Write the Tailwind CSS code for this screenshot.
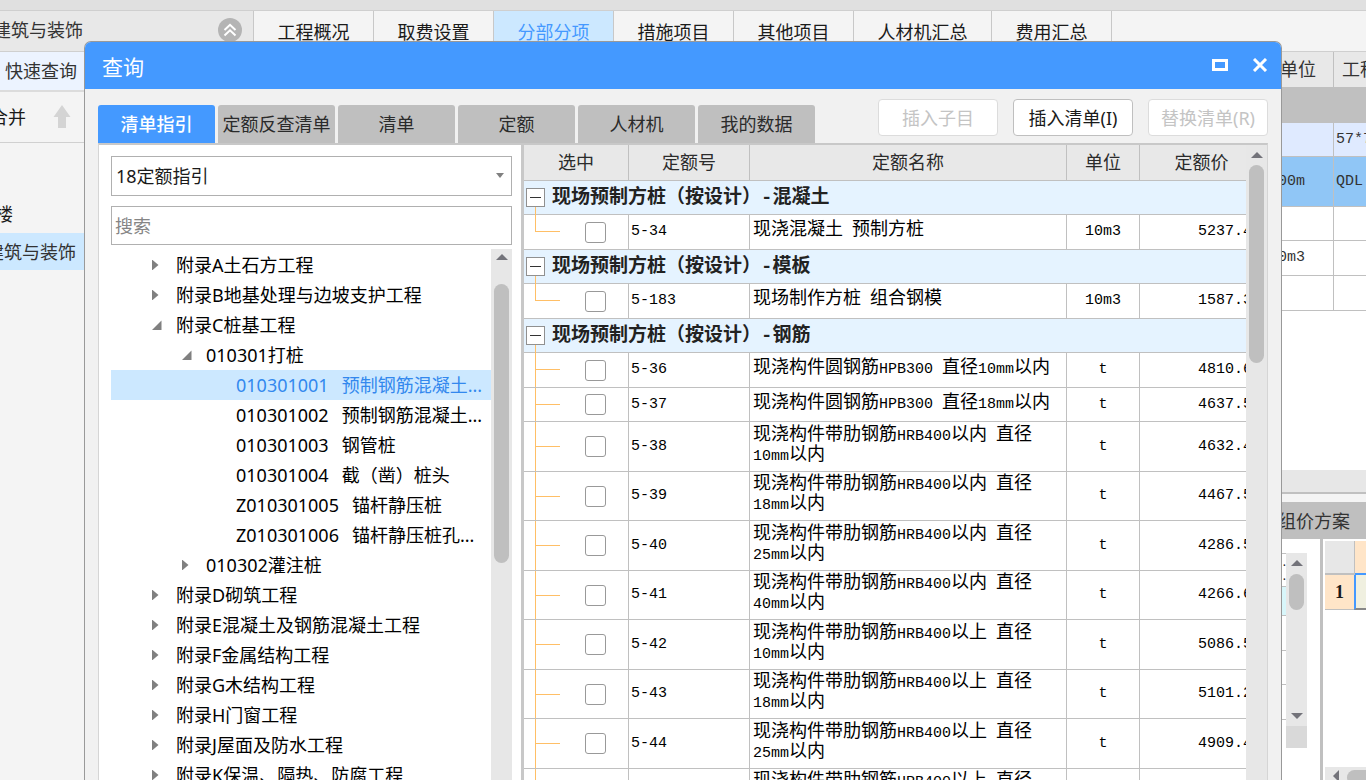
<!DOCTYPE html>
<html lang="zh-CN">
<head>
<meta charset="utf-8">
<meta name="viewport" content="width=device-width, initial-scale=1">
<title>查询</title>
<script src="https://cdn.jsdelivr.net/npm/@tailwindcss/browser@4"></script>
</head>
<body class="relative flex h-screen flex-col overflow-hidden bg-[#f4f4f4] font-['Noto_Sans','Noto_Sans_CJK_SC',sans-serif] text-[18px] leading-6 text-[#1a1a1a]">

<!-- main window -->
<div class="h-[10px] shrink-0 bg-[#e0e0e0]"></div>
<header class="flex h-[42px] shrink-0 border-y border-[#cfcfcf]">
  <div class="flex w-[253px] shrink-0 items-start justify-between overflow-hidden bg-[#e8e8e8] pt-[7px] pr-[11px]">
    <span class="-ml-[7px] text-[#333]">建筑与装饰</span>
    <button class="size-6" aria-label="收起">
      <svg viewBox="0 0 24 24" class="size-6"><circle cx="12" cy="12" r="12" fill="#b4b4b4"/><path d="M6.500 12 12 6.800 17.500 12M6.500 17.500 12 12.300 17.500 17.500" fill="none" stroke="#fff" stroke-width="2"/></svg>
    </button>
  </div>
  <nav class="flex [&>button]:w-[120px] [&>button]:border-r [&>button]:border-[#c8c8c8] [&>button]:pt-[6px] [&>button]:pb-1">
    <button class="min-w-[121px] border-l">工程概况</button>
    <button>取费设置</button>
    <button class="bg-[#cce8ff] text-[#4499ff]">分部分项</button>
    <button>措施项目</button>
    <button>其他项目</button>
    <button class="min-w-[138px]">人材机汇总</button>
    <button>费用汇总</button>
  </nav>
</header>

<div class="flex min-h-0 flex-1 justify-between">
  <aside class="w-[253px] shrink-0 overflow-hidden">
    <div class="flex h-[40px] items-center border-b-2 border-[#dcdcdc] bg-[#ecf3ff] pl-[5px] text-[#333]">快速查询</div>
    <div class="flex h-[51px] items-center gap-[27px] border-b border-[#d0d0d0]">
      <span class="-ml-[10px]">合并</span>
      <svg viewBox="0 0 18 24" class="h-6 w-[18px]"><path d="M9 0 17.500 12H13V23H5V12H.500Z" fill="#d4d4d4"/></svg>
    </div>
    <div class="h-[90px] pt-[59px]"><span class="-ml-[5px]">楼</span></div>
    <div class="flex h-[37px] items-center bg-[#cce8ff] text-[#333]"><span class="-ml-[14px]">建筑与装饰</span></div>
  </aside>

  <section class="flex w-[103px] shrink-0 flex-col overflow-hidden bg-white">
    <table class="w-[140px] table-fixed border-separate border-spacing-0 text-left font-['Liberation_Mono','Noto_Sans_CJK_SC',monospace] text-[15px] text-[#333] [&_td]:border-r [&_td]:border-b [&_td]:border-[#c0c0c0] [&_td:first-child]:pl-[6px] [&_td]:pl-[2px] [&_th]:border-r [&_th]:border-b [&_th]:border-[#c0c0c0] [&_th]:pt-[3px]">
      <colgroup><col class="w-[71px]"><col></colgroup>
      <tr class="h-[36px] bg-[#e8e8e8] text-[18px]"><th class="font-normal text-center">单位</th><th class="pl-2 font-normal whitespace-nowrap">工程量</th></tr>
      <tr class="h-[35px] bg-[#c0c0c0]"><td></td><td></td></tr>
      <tr class="h-[34px] bg-[#dfeaff]"><td></td><td>57*7</td></tr>
      <tr class="h-[50px] bg-[#90c6f6]"><td>100m</td><td>QDL</td></tr>
      <tr class="h-[34px]"><td></td><td></td></tr>
      <tr class="h-[35px]"><td>10m3</td><td></td></tr>
      <tr class="h-[35px]"><td></td><td></td></tr>
    </table>
    <div class="mt-[159px] h-[24px] shrink-0 border-b-2 border-[#c0c0c0] bg-[#e7e7e7]"></div>
    <div class="h-[8px] shrink-0 bg-[#f4f4f4]"></div>
    <div class="flex h-[37px] shrink-0 items-center bg-[#bfbfbf] pl-[15px] text-[#333]">组价方案</div>
    <div class="flex min-h-0 flex-1">
      <div class="flex w-[60px] shrink-0 border-r-[3px] border-[#c0c0c0] pt-[14px]">
        <div class="w-[23px] text-right text-[12px] leading-[14px] [&>div]:border-b [&>div]:border-[#c0c0c0]">
          <div class="h-[34px] border-t pt-px"><p>.</p><p>.</p></div>
          <div class="h-[29px] bg-[#d8f6fa]"></div>
          <div class="h-[35px]"></div>
          <div class="h-[34px]"></div>
          <div class="h-[35px]"></div>
        </div>
        <div class="flex h-[195px] w-[21px] flex-col items-center border-b-[22px] border-[#d9d9d9] bg-[#e7e7e7]">
          <svg viewBox="0 0 12 6" class="mt-[7px] h-[6px] w-3"><path d="M6 0 12 6H0Z" fill="#73737a"/></svg>
          <div class="mt-2 h-9 w-[15px] rounded-full bg-[#bfbfbf]"></div>
          <svg viewBox="0 0 12 6" class="mt-auto mb-[7px] h-[6px] w-3"><path d="M0 0H12L6 6Z" fill="#73737a"/></svg>
        </div>
      </div>
      <div class="flex min-w-0 flex-1 flex-col pl-[2px]">
        <div class="flex h-[36px] shrink-0 pt-[2px]">
          <div class="w-[30px] border-r border-b-2 border-[#c0c0c0] bg-[#e7e7e7]"></div>
          <div class="flex-1 border-b-2 border-[#4499ff] bg-[#ffe5c8]"></div>
        </div>
        <div class="flex h-[35px] shrink-0">
          <div class="flex w-[29px] items-center justify-center border-b border-[#c0c0c0] bg-[#ffe5c8] font-['Liberation_Serif',serif] font-bold">1</div>
          <div class="flex-1 border-b-2 border-l-2 border-b-[#888] border-l-[#4499ff] bg-[#f0f0e0]"></div>
        </div>
        <div class="mt-auto flex h-[13px] gap-2 overflow-hidden bg-[#e7e7e7] pt-[3px] pl-2">
          <svg viewBox="0 0 6 12" class="h-3 w-[6px] shrink-0"><path d="M6 0V12L0 6Z" fill="#73737a"/></svg>
          <div class="h-[15px] w-10 shrink-0 rounded-full bg-[#bfbfbf]"></div>
        </div>
      </div>
    </div>
  </section>
</div>

<!-- query dialog -->
<div role="dialog" aria-labelledby="dialog-title" class="absolute top-[41px] right-[84px] bottom-0 left-[84px] flex flex-col overflow-hidden rounded-t-[7px] border border-b-0 border-[#999] bg-[#f1f1f1]">
  <div class="flex h-[47px] shrink-0 items-center justify-between bg-[#4499ff] pr-[13px] pb-[2px] pl-[17px] text-white">
    <h1 id="dialog-title" class="pt-1 text-[21px]">查询</h1>
    <div class="flex gap-6">
      <button aria-label="最大化"><svg viewBox="0 0 16 14" class="h-[14px] w-4"><path d="M1.500 2.500H14.500V11.500H1.500Z" fill="none" stroke="#fff" stroke-width="3"/></svg></button>
      <button aria-label="关闭"><svg viewBox="0 0 16 14" class="h-[14px] w-4"><path d="M2 1 14 13M14 1 2 13" fill="none" stroke="#fff" stroke-width="3"/></svg></button>
    </div>
  </div>

  <div class="flex h-[54px] shrink-0 items-end justify-between px-[13px]">
    <div role="tablist" class="flex gap-[3px] [&>button]:h-[38px] [&>button]:w-[117px] [&>button]:rounded-t-[3px] [&>button]:whitespace-nowrap">
      <button role="tab" aria-selected="true" class="bg-[#4499ff] font-medium text-white">清单指引</button>
      <button role="tab" class="bg-[#bfbfbf] text-[#2b2b2b]">定额反查清单</button>
      <button role="tab" class="bg-[#bfbfbf] text-[#2b2b2b]">清单</button>
      <button role="tab" class="bg-[#bfbfbf] text-[#2b2b2b]">定额</button>
      <button role="tab" class="bg-[#bfbfbf] text-[#2b2b2b]">人材机</button>
      <button role="tab" class="bg-[#bfbfbf] text-[#2b2b2b]">我的数据</button>
    </div>
    <div class="flex gap-[15px] pb-[7px] [&>button]:h-[37px] [&>button]:w-[120px] [&>button]:rounded-[4px] [&>button]:border [&>button]:bg-white">
      <button disabled class="border-[#dcdcdc] text-[#c4c4c4]">插入子目</button>
      <button class="border-[#bfbfbf]">插入清单(I)</button>
      <button disabled class="border-[#dcdcdc] text-[#c4c4c4]">替换清单(R)</button>
    </div>
  </div>

  <div class="mx-[13px] flex min-h-0 flex-1 border-x border-t-2 border-x-[#d5d5d5] border-t-[#c8c8c8] bg-white">
    <div class="flex w-[422px] shrink-0 flex-col pt-[11px] pr-[9px] pl-3">
      <div class="relative">
        <select aria-label="定额指引" class="h-[40px] w-full appearance-none border border-[#b0b0b0] bg-white pl-1"><option>18定额指引</option></select>
        <svg viewBox="0 0 8 5" class="pointer-events-none absolute top-[17px] right-2 h-[5px] w-2"><path d="M0 0H8L4 5Z" fill="#808080"/></svg>
      </div>
      <input type="text" aria-label="搜索" placeholder="搜索" class="mt-[10px] h-[39px] w-full shrink-0 border border-[#b0b0b0] bg-white pl-[3px] placeholder:text-[#858585]">
      <div class="mt-1 flex min-h-0 flex-1">
        <ul role="tree" class="min-w-0 flex-1 overflow-hidden pt-px whitespace-nowrap text-black [&>li]:flex [&>li]:h-[30px] [&>li]:items-center [&_svg]:mr-[14px] [&_svg]:size-[10px] [&_svg]:shrink-0 [&_svg]:fill-[#808080]">
          <li class="pl-[41px]"><svg viewBox="0 0 10 10"><path d="M0-.500 6.500 5 0 10.500Z"/></svg>附录A土石方工程</li>
          <li class="pl-[41px]"><svg viewBox="0 0 10 10"><path d="M0-.500 6.500 5 0 10.500Z"/></svg>附录B地基处理与边坡支护工程</li>
          <li class="pl-[41px]"><svg viewBox="0 0 10 10"><path d="M9.500 .500V10H0Z"/></svg>附录C桩基工程</li>
          <li class="pl-[71px]"><svg viewBox="0 0 10 10"><path d="M9.500 .500V10H0Z"/></svg>010301打桩</li>
          <li class="gap-[13px] bg-[#cce8ff] pl-[125px] text-[#3388ee]"><span>010301001</span><span>预制钢筋混凝土...</span></li>
          <li class="gap-[13px] pl-[125px]"><span>010301002</span><span>预制钢筋混凝土...</span></li>
          <li class="gap-[13px] pl-[125px]"><span>010301003</span><span>钢管桩</span></li>
          <li class="gap-[13px] pl-[125px]"><span>010301004</span><span>截（凿）桩头</span></li>
          <li class="gap-[13px] pl-[125px]"><span>Z010301005</span><span>锚杆静压桩</span></li>
          <li class="gap-[13px] pl-[125px]"><span>Z010301006</span><span>锚杆静压桩孔...</span></li>
          <li class="pl-[71px]"><svg viewBox="0 0 10 10"><path d="M0-.500 6.500 5 0 10.500Z"/></svg>010302灌注桩</li>
          <li class="pl-[41px]"><svg viewBox="0 0 10 10"><path d="M0-.500 6.500 5 0 10.500Z"/></svg>附录D砌筑工程</li>
          <li class="pl-[41px]"><svg viewBox="0 0 10 10"><path d="M0-.500 6.500 5 0 10.500Z"/></svg>附录E混凝土及钢筋混凝土工程</li>
          <li class="pl-[41px]"><svg viewBox="0 0 10 10"><path d="M0-.500 6.500 5 0 10.500Z"/></svg>附录F金属结构工程</li>
          <li class="pl-[41px]"><svg viewBox="0 0 10 10"><path d="M0-.500 6.500 5 0 10.500Z"/></svg>附录G木结构工程</li>
          <li class="pl-[41px]"><svg viewBox="0 0 10 10"><path d="M0-.500 6.500 5 0 10.500Z"/></svg>附录H门窗工程</li>
          <li class="pl-[41px]"><svg viewBox="0 0 10 10"><path d="M0-.500 6.500 5 0 10.500Z"/></svg>附录J屋面及防水工程</li>
          <li class="pl-[41px]"><svg viewBox="0 0 10 10"><path d="M0-.500 6.500 5 0 10.500Z"/></svg>附录K保温、隔热、防腐工程</li>
        </ul>
        <div class="flex w-[21px] shrink-0 flex-col items-center bg-[#e7e7e7]">
          <svg viewBox="0 0 12 6" class="mt-[5px] h-[6px] w-3"><path d="M6 0 12 6H0Z" fill="#73737a"/></svg>
          <div class="mt-6 h-[279px] w-[15px] rounded-full bg-[#bfbfbf]"></div>
        </div>
      </div>
    </div>

    <div class="min-w-0 flex-1 overflow-hidden border-l-[3px] border-[#c8c8c8]">
      <table class="w-[calc(100%+18px)] table-fixed border-separate border-spacing-0 font-['Liberation_Mono','Noto_Sans_CJK_SC',monospace] text-[15px] leading-5 text-black [&_b]:text-[18px] [&_b]:leading-4 [&_b]:font-normal [&_input]:ml-[61px] [&_input]:block [&_input]:size-[21px] [&_input]:appearance-none [&_input]:rounded-[3px] [&_input]:border [&_input]:border-[#999] [&_input]:bg-white [&_td]:relative [&_td]:border-r [&_td]:border-b [&_td]:border-[#c0c0c0] [&_td:nth-child(2)]:pl-[2px] [&_td:nth-child(3)]:pl-[3px] [&_td:nth-child(4)]:text-center [&_td:nth-child(5)]:pr-[11px] [&_td:nth-child(5)]:text-right [&_i]:absolute [&_i]:top-0 [&_i]:left-[11px] [&_i]:w-[25px] [&_i]:border-l [&_i]:border-[#ffbf66] [&_th]:border-r [&_th]:border-b [&_th]:border-[#c0c0c0]">
        <colgroup><col class="w-[105px]"><col class="w-[121px]"><col><col class="w-[73px]"><col class="w-[124px]"></colgroup>
        <thead>
          <tr class="h-[36px] bg-[#e8e8e8] text-[18px] text-[#2b2b2b] [&>th]:pt-[3px] [&>th]:font-normal"><th>选中</th><th>定额号</th><th>定额名称</th><th>单位</th><th>定额价</th></tr>
        </thead>
        <tbody>
          <tr class="h-[34px] bg-[#e5f3ff] text-[#222]"><td colspan="5"><i class="mt-[17px] h-[17px]"></i><div class="relative flex items-center gap-[7px] pl-[2px] text-[19px] font-bold"><button class="flex size-[19px] items-center justify-center border border-[#909090] bg-white" aria-label="折叠"><span class="h-px w-[11px] bg-[#333]"></span></button><span>现场预制方桩（按设计）-混凝土</span></div></td></tr>
          <tr class="h-[35px]"><td><i class="h-[17px] border-b"></i><input type="checkbox" aria-label="5-34"></td><td>5-34</td><td><b>现浇混凝土</b> <b>预制方桩</b></td><td>10m3</td><td>5237.4</td></tr>
          <tr class="h-[34px] bg-[#e5f3ff] text-[#222]"><td colspan="5"><i class="mt-[17px] h-[17px]"></i><div class="relative flex items-center gap-[7px] pl-[2px] text-[19px] font-bold"><button class="flex size-[19px] items-center justify-center border border-[#909090] bg-white" aria-label="折叠"><span class="h-px w-[11px] bg-[#333]"></span></button><span>现场预制方桩（按设计）-模板</span></div></td></tr>
          <tr class="h-[35px]"><td><i class="h-[17px] border-b"></i><input type="checkbox" aria-label="5-183"></td><td>5-183</td><td><b>现场制作方桩</b> <b>组合钢模</b></td><td>10m3</td><td>1587.3</td></tr>
          <tr class="h-[34px] bg-[#e5f3ff] text-[#222]"><td colspan="5"><i class="mt-[17px] h-[17px]"></i><div class="relative flex items-center gap-[7px] pl-[2px] text-[19px] font-bold"><button class="flex size-[19px] items-center justify-center border border-[#909090] bg-white" aria-label="折叠"><span class="h-px w-[11px] bg-[#333]"></span></button><span>现场预制方桩（按设计）-钢筋</span></div></td></tr>
          <tr class="h-[35px]"><td><i class="h-full"></i><i class="h-[17px] border-b"></i><input type="checkbox" aria-label="5-36"></td><td>5-36</td><td><b>现浇构件圆钢筋</b>HPB300 <b>直径</b>10mm<b>以内</b></td><td>t</td><td>4810.6</td></tr>
          <tr class="h-[34px]"><td><i class="h-full"></i><i class="h-[17px] border-b"></i><input type="checkbox" aria-label="5-37"></td><td>5-37</td><td><b>现浇构件圆钢筋</b>HPB300 <b>直径</b>18mm<b>以内</b></td><td>t</td><td>4637.5</td></tr>
          <tr class="h-[50px]"><td><i class="h-full"></i><i class="h-[25px] border-b"></i><input type="checkbox" aria-label="5-38"></td><td>5-38</td><td><b>现浇构件带肋钢筋</b>HRB400<b>以内</b> <b>直径</b><br>10mm<b>以内</b></td><td>t</td><td>4632.4</td></tr>
          <tr class="h-[49px]"><td><i class="h-full"></i><i class="h-[25px] border-b"></i><input type="checkbox" aria-label="5-39"></td><td>5-39</td><td><b>现浇构件带肋钢筋</b>HRB400<b>以内</b> <b>直径</b><br>18mm<b>以内</b></td><td>t</td><td>4467.5</td></tr>
          <tr class="h-[50px]"><td><i class="h-full"></i><i class="h-[25px] border-b"></i><input type="checkbox" aria-label="5-40"></td><td>5-40</td><td><b>现浇构件带肋钢筋</b>HRB400<b>以内</b> <b>直径</b><br>25mm<b>以内</b></td><td>t</td><td>4286.5</td></tr>
          <tr class="h-[49px]"><td><i class="h-full"></i><i class="h-[25px] border-b"></i><input type="checkbox" aria-label="5-41"></td><td>5-41</td><td><b>现浇构件带肋钢筋</b>HRB400<b>以内</b> <b>直径</b><br>40mm<b>以内</b></td><td>t</td><td>4266.6</td></tr>
          <tr class="h-[50px]"><td><i class="h-full"></i><i class="h-[25px] border-b"></i><input type="checkbox" aria-label="5-42"></td><td>5-42</td><td><b>现浇构件带肋钢筋</b>HRB400<b>以上</b> <b>直径</b><br>10mm<b>以内</b></td><td>t</td><td>5086.5</td></tr>
          <tr class="h-[49px]"><td><i class="h-full"></i><i class="h-[25px] border-b"></i><input type="checkbox" aria-label="5-43"></td><td>5-43</td><td><b>现浇构件带肋钢筋</b>HRB400<b>以上</b> <b>直径</b><br>18mm<b>以内</b></td><td>t</td><td>5101.2</td></tr>
          <tr class="h-[50px]"><td><i class="h-full"></i><i class="h-[25px] border-b"></i><input type="checkbox" aria-label="5-44"></td><td>5-44</td><td><b>现浇构件带肋钢筋</b>HRB400<b>以上</b> <b>直径</b><br>25mm<b>以内</b></td><td>t</td><td>4909.4</td></tr>
          <tr class="h-[49px]"><td><i class="h-full"></i><i class="h-[25px] border-b"></i><input type="checkbox" aria-label="5-45"></td><td>5-45</td><td><b>现浇构件带肋钢筋</b>HRB400<b>以上</b> <b>直径</b><br>40mm<b>以内</b></td><td>t</td><td>4889.4</td></tr>
        </tbody>
      </table>
    </div>
    <div class="flex w-[21px] shrink-0 flex-col items-center bg-[#e7e7e7]">
      <svg viewBox="0 0 12 6" class="mt-[7px] h-[6px] w-3"><path d="M6 0 12 6H0Z" fill="#73737a"/></svg>
      <div class="mt-[7px] h-[198px] w-[15px] rounded-full bg-[#bfbfbf]"></div>
    </div>
  </div>
</div>
</body>
</html>
